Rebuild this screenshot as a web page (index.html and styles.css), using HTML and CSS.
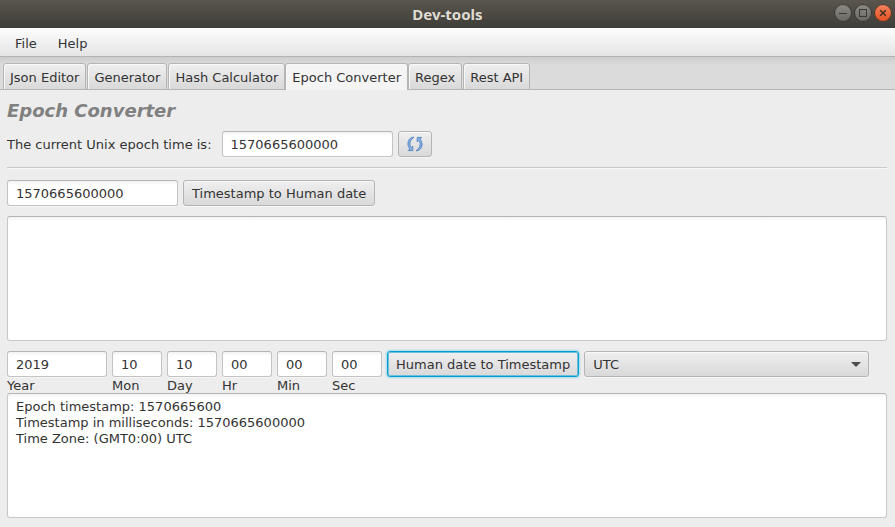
FILE: index.html
```html
<!DOCTYPE html>
<html lang="en">
<head>
<meta charset="utf-8">
<title>Dev-tools</title>
<link rel="stylesheet" href="styles.css">
</head>
<body>
<header class="titlebar">
  <h1 class="title">Dev-tools</h1>
  <div class="window-buttons">
    <button class="win" type="button" aria-label="Minimize">
      <svg width="18" height="18" viewBox="0 0 18 18"><path d="M5 9.5h8" stroke="#3a3934" fill="none"/></svg>
    </button>
    <button class="win" type="button" aria-label="Maximize">
      <svg width="18" height="18" viewBox="0 0 18 18"><rect x="5.5" y="5.5" width="7" height="7" stroke="#3a3934" fill="none"/></svg>
    </button>
    <button class="win win-close" type="button" aria-label="Close">
      <svg width="18" height="18" viewBox="0 0 18 18"><path d="M6.2 6.2l5.6 5.6M11.8 6.2l-5.6 5.6" stroke="#3a2a20" stroke-width="1.4" fill="none"/></svg>
    </button>
  </div>
</header>
<nav class="menubar">
  <button class="menu" type="button">File</button>
  <button class="menu" type="button">Help</button>
</nav>
<div class="tabs" role="tablist">
  <button class="tab" type="button" role="tab">Json Editor</button>
  <button class="tab" type="button" role="tab">Generator</button>
  <button class="tab" type="button" role="tab">Hash Calculator</button>
  <button class="tab selected" type="button" role="tab" aria-selected="true">Epoch Converter</button>
  <button class="tab" type="button" role="tab">Regex</button>
  <button class="tab" type="button" role="tab">Rest API</button>
</div>
<main class="content">
  <h2 class="heading">Epoch Converter</h2>
  <div class="row">
    <label class="now-label" for="now">The current Unix epoch time is:</label>
    <input class="field long" id="now" type="text" value="1570665600000">
    <button class="button refresh" type="button" aria-label="Refresh">
      <svg width="16" height="16" viewBox="0 0 16 16">
        <g fill="#86b0e2" stroke="#4a7dbd" stroke-width="0.8" stroke-linejoin="round">
          <path d="M6.700 1C3.200 1.300.9 4.200.9 7.500c0 2.100.7 4 1.900 5.400L1.200 14.600H5.800V10.200L4.400 11.400C3.400 10.400 2.900 9 3 7.500 3.100 5.100 4.300 3.300 5.600 2.700z"/>
          <path d="M9.300 15C12.800 14.700 15.100 11.800 15.100 8.500c0-2.100-.7-4-1.900-5.400L14.800 1.400H10.200V5.800L11.600 4.600C12.600 5.600 13.100 7 13 8.500 12.900 10.900 11.700 12.700 10.400 13.300z"/>
        </g>
      </svg>
    </button>
  </div>
  <hr class="separator">
  <div class="row">
    <input class="field long" type="text" value="1570665600000" aria-label="Timestamp">
    <button class="button" type="button">Timestamp to Human date</button>
  </div>
  <textarea class="output date-output" aria-label="Human date"></textarea>
  <div class="row">
    <div class="part year"><input class="field" id="year" type="text" value="2019"><label for="year">Year</label></div>
    <div class="part"><input class="field" id="mon" type="text" value="10"><label for="mon">Mon</label></div>
    <div class="part"><input class="field" id="day" type="text" value="10"><label for="day">Day</label></div>
    <div class="part"><input class="field" id="hr" type="text" value="00"><label for="hr">Hr</label></div>
    <div class="part"><input class="field" id="min" type="text" value="00"><label for="min">Min</label></div>
    <div class="part"><input class="field" id="sec" type="text" value="00"><label for="sec">Sec</label></div>
    <button class="button focused" type="button">Human date to Timestamp</button>
    <div class="zone">
      <select class="button zone-select" aria-label="Time zone"><option>UTC</option></select>
    </div>
  </div>
  <textarea class="output" aria-label="Timestamp result">Epoch timestamp: 1570665600
Timestamp in milliseconds: 1570665600000
Time Zone: (GMT0:00) UTC</textarea>
</main>
</body>
</html>
```

FILE: styles.css
```css
* {
  box-sizing: border-box;
}

body {
  margin: 0;
  min-height: 100vh;
  display: flex;
  flex-direction: column;
  background: #ededed;
  color: #333;
  font: 13px/16px "DejaVu Sans", sans-serif;
}

button,
input,
select,
textarea {
  margin: 0;
  font: inherit;
  color: inherit;
}

.titlebar {
  display: grid;
  grid-template-columns: 1fr auto 1fr;
  align-items: center;
  height: 28px;
  padding: 0 3px;
  background: linear-gradient(#5a564e, #3e3d38);
}

.title {
  grid-column: 2;
  margin: 0;
  color: #dfdbd2;
  font: bold 15px/26px "Noto Sans", "Open Sans", sans-serif;
}

.window-buttons {
  display: flex;
  justify-content: flex-end;
  gap: 2px;
  padding-bottom: 2px;
}

.win {
  width: 18px;
  height: 18px;
  padding: 0;
  border: 0;
  border-radius: 50%;
  background: linear-gradient(#8d8b84, #696860);
  box-shadow: inset 0 0 0 1px #34332f;
}

.win-close {
  background: linear-gradient(#f4845f, #e2501f);
}

.win svg {
  display: block;
}

.menubar {
  display: flex;
  height: 29px;
  padding: 0 7px;
  border-bottom: 1px solid #b4b4b4;
  background: linear-gradient(#fdfdfd, #e4e4e4);
}

.menu {
  padding: 4px 8px 0;
  margin-right: 5px;
  border: 0;
  background: none;
}

.tabs {
  display: flex;
  align-items: flex-end;
  gap: 1px;
  height: 33px;
  padding: 6px 3px 0;
  background: linear-gradient(#b5b5b5, #b5b5b5) bottom / 100% 1px no-repeat, linear-gradient(#cdcdcd, #dbdbdb 8px);
}

.tab {
  height: 27px;
  padding: 2px 6px 0;
  border: 1px solid #b5b5b5;
  border-radius: 3px 3px 0 0;
  background: linear-gradient(#efefef, #d9d9d9);
  box-shadow: inset 1px 1px 0 #f8f8f8;
}

.tab.selected {
  margin: 0 -1px;
  border-bottom: 0;
  background: #f4f4f4;
}

.content {
  flex: 1;
  display: flex;
  flex-direction: column;
  padding: 10px 8px 9px 7px;
}

.heading {
  margin: 0 0 10px;
  color: #808080;
  font-size: 18px;
  font-style: italic;
  line-height: 21px;
}

.row {
  display: flex;
  gap: 5px;
}

.now-label {
  margin-right: 5px;
  line-height: 28px;
  height: 26px;
}

.field {
  width: 100%;
  height: 26px;
  padding: 0 8px;
  border: 1px solid #c3c3c3;
  border-top-color: #b5b5b5;
  border-radius: 3px;
  background: linear-gradient(#f2f2f2, #fff 4px);
  box-shadow: 0 1px 0 #f6f6f6;
}

.long {
  width: 171px;
}

.button {
  height: 26px;
  padding: 2px 8px 0;
  border: 1px solid #b5b5b5;
  border-radius: 3px;
  background: linear-gradient(#efefef, #d9d9d9);
  box-shadow: inset 0 1px 0 #f8f8f8, 0 1px 0 #f6f6f6;
}

.refresh {
  padding-top: 0;
}

.refresh svg {
  display: block;
}

.focused {
  border-color: #039ed3;
  box-shadow: inset 0 0 0 1px #6cc0de, 0 0 2px 1px #a5d9eb;
}

.separator {
  width: 100%;
  height: 2px;
  margin: 10px 0 11px;
  border: 0;
  border-top: 1px solid #c8c8c8;
  background: #f8f8f8;
}

.output {
  display: block;
  flex: 1 0 125px;
  width: 100%;
  padding: 5px 8px;
  border: 1px solid #c8c8c8;
  border-top-color: #b5b5b5;
  border-radius: 3px;
  background: linear-gradient(#f2f2f2, #fff 4px);
  resize: none;
}

.date-output {
  margin: 10px 0;
}

.part {
  width: 50px;
}

.year {
  width: 100px;
}

.part label {
  display: block;
  height: 16px;
  line-height: 18px;
}

.zone {
  position: relative;
  flex: 1;
  margin-right: 18px;
}

.zone-select {
  width: 100%;
  appearance: none;
}

.zone::after {
  content: "";
  position: absolute;
  top: 11px;
  right: 8px;
  border: 5px solid transparent;
  border-top-color: #4d4d4d;
  border-bottom: 0;
  pointer-events: none;
}
```
